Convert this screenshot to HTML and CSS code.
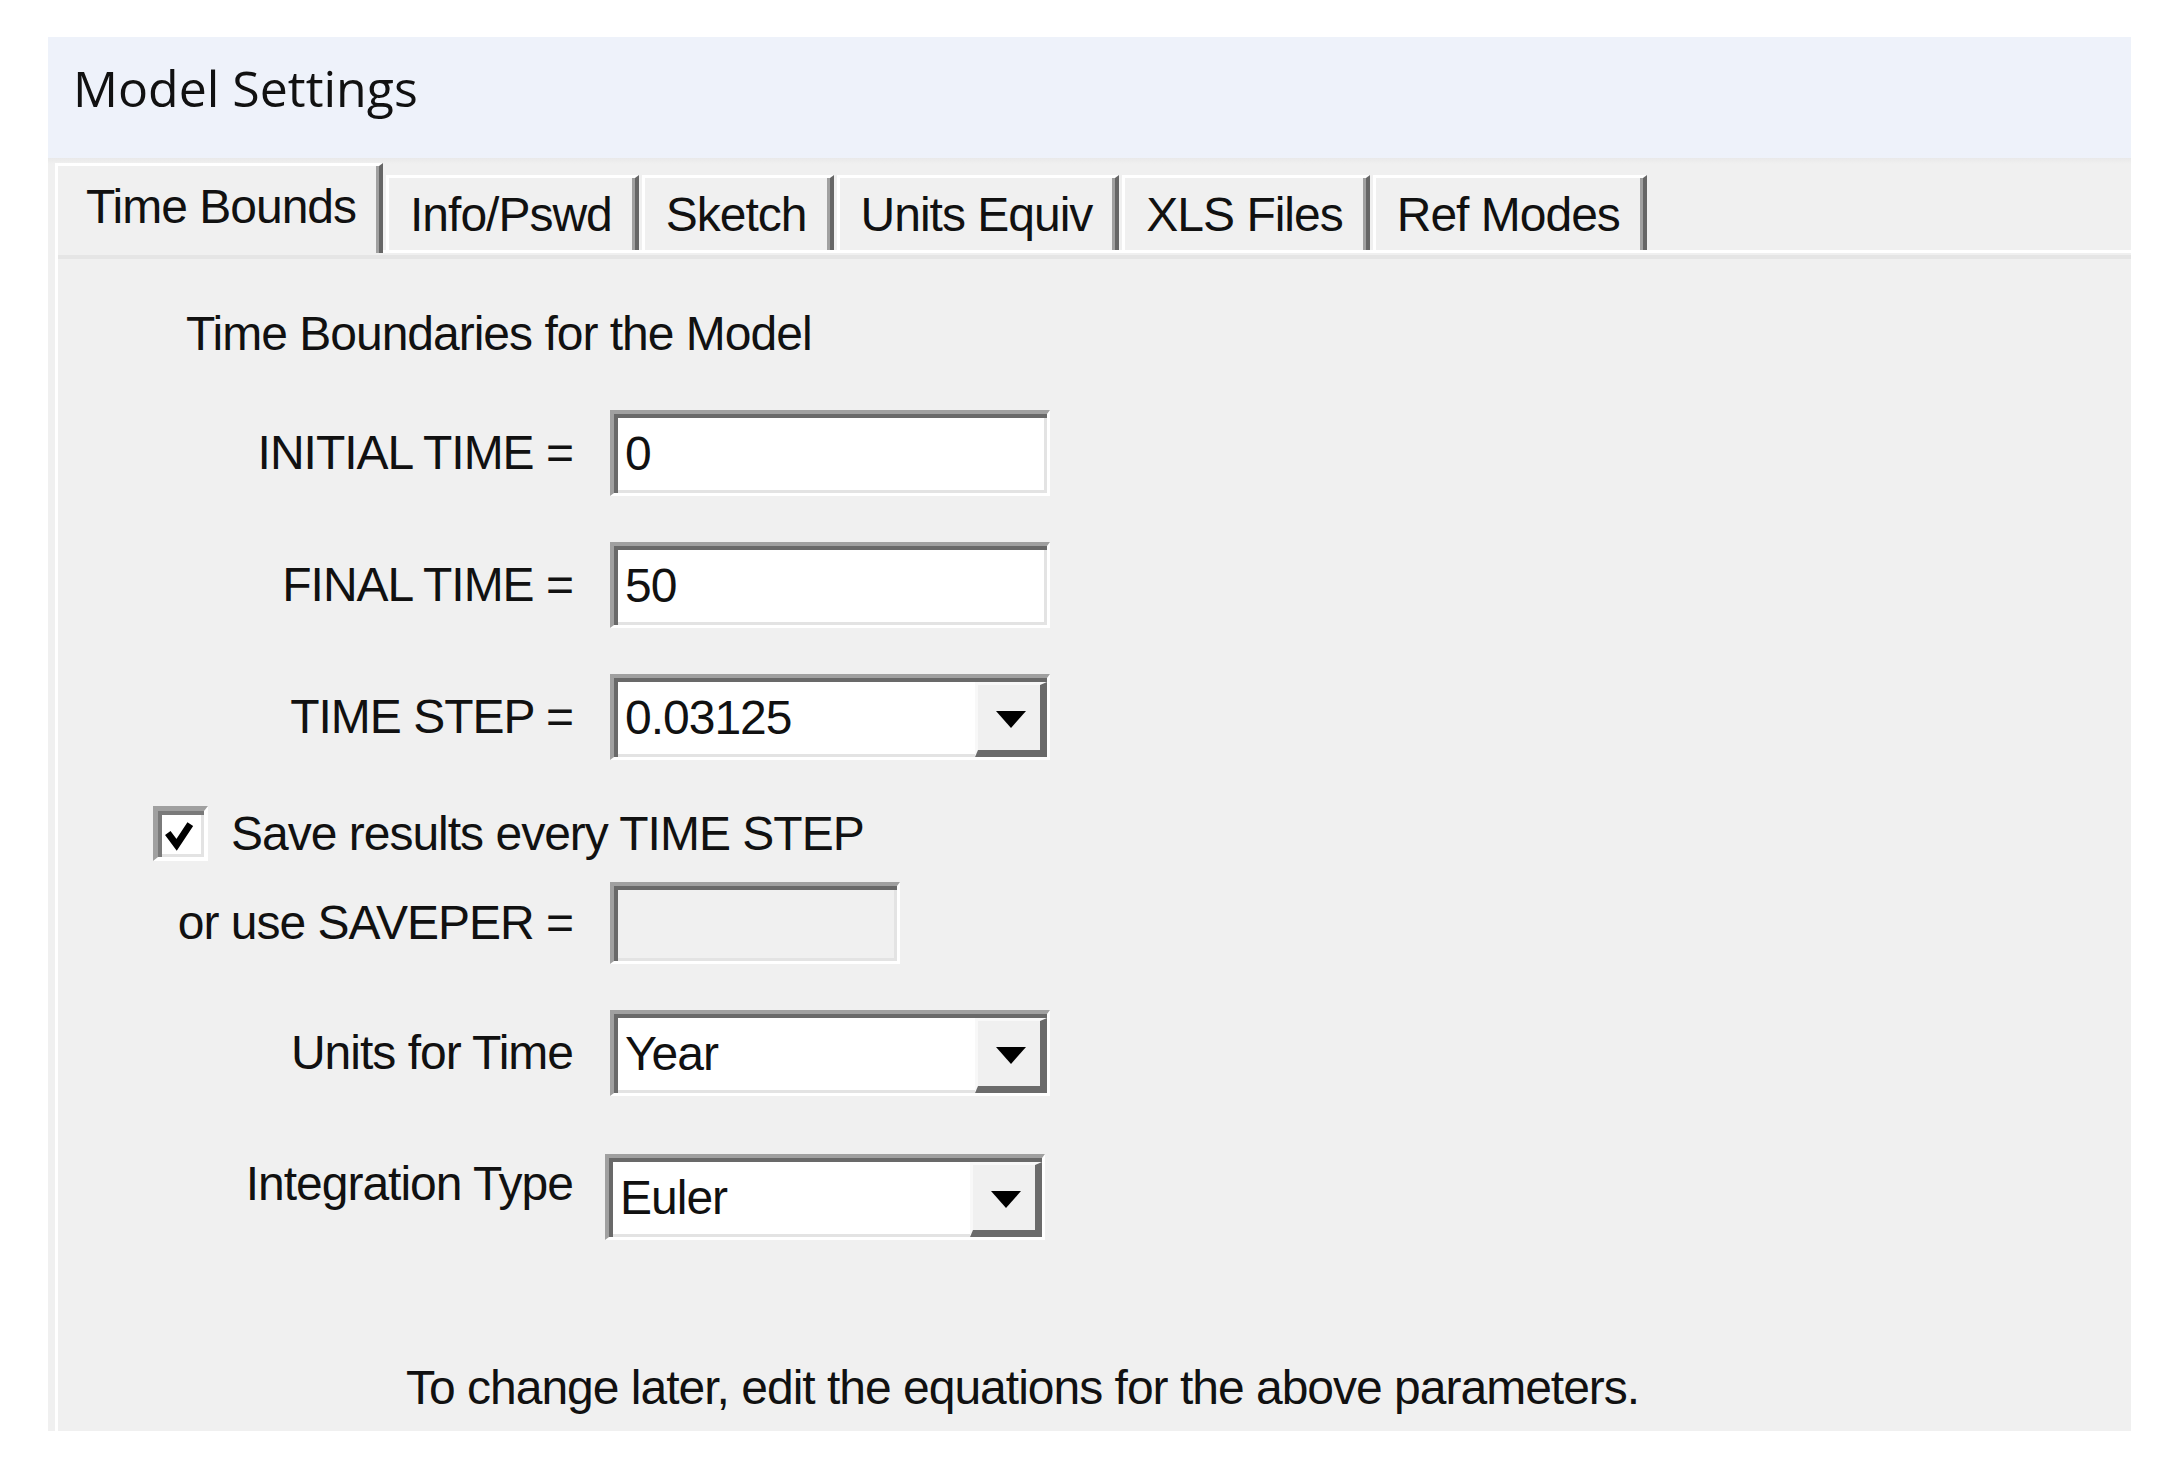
FILE: index.html
```html
<!DOCTYPE html>
<html lang="en">
<head>
<meta charset="utf-8">
<title>Model Settings</title>
<link rel="stylesheet" href="styles.css">
</head>
<body>
<div class="dialog">
  <div class="title">Model Settings</div>
  <div class="tabs">
    <div class="tab active">Time Bounds</div>
    <div class="tab">Info/Pswd</div>
    <div class="tab">Sketch</div>
    <div class="tab">Units Equiv</div>
    <div class="tab">XLS Files</div>
    <div class="tab">Ref Modes</div>
  </div>
  <div class="page">
    <div class="heading">Time Boundaries for the Model</div>
    <div class="form">
      <div class="row">
        <div class="label">INITIAL TIME =</div>
        <div class="field">0</div>
      </div>
      <div class="row">
        <div class="label">FINAL TIME =</div>
        <div class="field">50</div>
      </div>
      <div class="row">
        <div class="label">TIME STEP =</div>
        <div class="field combo"><span class="value">0.03125</span><span class="drop"><svg width="30" height="17" viewBox="0 0 30 17"><polygon points="0,0 30,0 15,17" fill="#000"/></svg></span></div>
      </div>
      <div class="check-row">
        <span class="checkbox"><svg width="47" height="47" viewBox="0 0 47 47"><polyline points="10,22 19,34 33,13" fill="none" stroke="#000" stroke-width="7"/></svg></span>
        <span>Save results every TIME STEP</span>
      </div>
      <div class="row tight">
        <div class="label">or use SAVEPER =</div>
        <div class="field disabled"></div>
      </div>
      <div class="row">
        <div class="label">Units for Time</div>
        <div class="field combo"><span class="value">Year</span><span class="drop"><svg width="30" height="17" viewBox="0 0 30 17"><polygon points="0,0 30,0 15,17" fill="#000"/></svg></span></div>
      </div>
      <div class="row loose">
        <div class="label">Integration Type</div>
        <div class="field combo"><span class="value">Euler</span><span class="drop"><svg width="30" height="17" viewBox="0 0 30 17"><polygon points="0,0 30,0 15,17" fill="#000"/></svg></span></div>
      </div>
    </div>
    <div class="note">To change later, edit the equations for the above parameters.</div>
  </div>
</div>
</body>
</html>
```
FILE: styles.css
```css
body {
  margin: 0;
  background: #ffffff;
  font-family: "Liberation Sans", Arial, sans-serif;
  font-size: 48px;
  line-height: 48px;
  letter-spacing: -1px;
  color: #111111;
}

.dialog {
  margin: 37px 0 0 48px;
  width: 2083px;
  height: 1394px;
  display: flex;
  flex-direction: column;
  background: #f0f0f0;
}

.title {
  height: 121px;
  box-sizing: border-box;
  padding: 26px 0 0 25px;
  background: #eef2fa;
  font-family: "Open Sans", "Noto Sans", sans-serif;
  font-size: 50px;
  line-height: 50px;
  letter-spacing: 0;
  color: #111111;
}

.tabs {
  display: flex;
  align-items: flex-end;
  gap: 3px;
  height: 92px;
  padding-left: 7px;
  background: linear-gradient(to bottom, #e9e9e9 0, #f0f0f0 6px);
}

.tab {
  box-sizing: border-box;
  height: 75px;
  padding: 13px 23px 0 21px;
  border-top: 3px solid #ffffff;
  border-left: 3px solid #ffffff;
  border-right: 4px solid #666666;
  box-shadow: inset -3px 0 0 #a0a0a0;
  background: #f0f0f0;
  white-space: nowrap;
}

.tab.active {
  height: 90px;
  margin-bottom: -3px;
  padding: 17px 23px 0 28px;
  position: relative;
  z-index: 1;
}

.page {
  flex: 1;
  display: flex;
  flex-direction: column;
  margin-left: 7px;
  padding-top: 57px;
  border-top: 3px solid #ffffff;
  border-left: 3px solid #ffffff;
  background: linear-gradient(to bottom, #f0f0f0 0, #f0f0f0 2px, #e5e5e5 2px, #e5e5e5 6px, #f0f0f0 6px);
}

.heading {
  padding-left: 128px;
}

.form {
  margin-top: 52px;
  display: flex;
  flex-direction: column;
}

.form > .row + .row,
.form > .row + .check-row,
.form > .check-row + .row {
  margin-top: 46px;
}

.form > .row.tight {
  margin-top: 21px;
}

.form > .row.loose {
  margin-top: 58px;
  align-items: flex-start;
}

.row {
  display: flex;
  align-items: center;
  gap: 37px;
}

.label {
  flex: none;
  width: 515px;
  text-align: right;
  white-space: nowrap;
}

.row.loose .label {
  margin-top: 6px;
}

.row.loose .field {
  margin-left: -5px;
}

.field {
  box-sizing: border-box;
  flex: none;
  width: 440px;
  height: 86px;
  display: flex;
  align-items: center;
  padding-left: 11px;
  border-style: solid;
  border-width: 4px 3px 3px 4px;
  border-color: #a0a0a0 #ffffff #ffffff #a0a0a0;
  box-shadow: inset 4px 4px 0 #696969, inset -3px -3px 0 #e3e3e3;
  background: #ffffff;
}

.field.disabled {
  width: 290px;
  height: 82px;
  background: #f0f0f0;
}

.combo {
  padding-right: 0;
}

.combo .value {
  flex: 1;
}

.drop {
  align-self: stretch;
  box-sizing: border-box;
  width: 72px;
  margin-top: 4px;
  display: flex;
  align-items: center;
  justify-content: center;
  padding: 4px 0 0 4px;
  border-style: solid;
  border-width: 3px 7px 7px 3px;
  border-color: #f8f8f8 #6b6b6b #6b6b6b #f8f8f8;
  background: #f0f0f0;
}

.check-row {
  display: flex;
  align-items: center;
  gap: 23px;
  padding-left: 95px;
}

.checkbox {
  flex: none;
  box-sizing: border-box;
  width: 55px;
  height: 55px;
  display: flex;
  border-style: solid;
  border-width: 5px 4px 4px 5px;
  border-color: #a0a0a0 #ffffff #ffffff #a0a0a0;
  box-shadow: inset 4px 4px 0 #7a7a7a, inset -3px -3px 0 #e3e3e3;
  background: #ffffff;
}

.note {
  margin-top: auto;
  margin-bottom: 19px;
  padding-left: 348px;
}
```
